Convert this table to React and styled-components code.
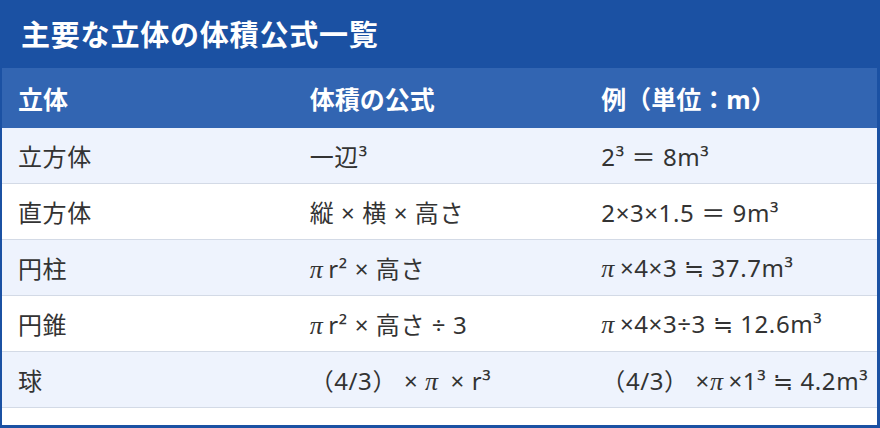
import React from 'react';
import styled, { createGlobalStyle } from 'styled-components';

const GlobalStyle = createGlobalStyle`
  html, body {
    margin: 0;
    padding: 0;
    background: #ffffff;
  }
  body {
    font-family: "Noto Sans", "Noto Sans CJK JP", sans-serif;
  }
`;

const Frame = styled.div`
  box-sizing: border-box;
  width: 880px;
  height: 428px;
  background: #ffffff;
  border: solid #1b51a3;
  border-width: 0 3px 3px 2px;
  overflow: hidden;
`;

const TitleBar = styled.h2`
  margin: 0 -3px 0 -2px;
  height: 68px;
  display: flex;
  align-items: center;
  padding: 0 21px 2px;
  box-sizing: border-box;
  background: #1b51a3;
  color: #ffffff;
  font-size: 29px;
  font-weight: 700;
  letter-spacing: 0.8px;
`;

const Table = styled.table`
  width: 100%;
  border-collapse: collapse;
  table-layout: fixed;
`;

const HeadCell = styled.th`
  height: 60px;
  padding: 0 16px;
  text-align: left;
  background: #3265b2;
  color: #ffffff;
  font-size: 25px;
  font-weight: 700;
  white-space: nowrap;
`;

const Row = styled.tr`
  background: ${(p) => (p.$alt ? '#ffffff' : '#eef3fd')};
  border-bottom: 1px solid #d3dae6;
`;

const Cell = styled.td`
  height: 55px;
  padding: 0 16px;
  color: #333333;
  font-size: 24px;
  letter-spacing: 0.6px;
  white-space: nowrap;
`;

// math pi, drawn like the reference's slanted serif glyph
const Pi = styled.span`
  font-family: "Liberation Serif", "DejaVu Serif", serif;
  font-style: italic;
  font-size: 26px;
  margin-right: 5px;
`;

const rows = [
  ['立方体', '一辺³', '2³ ＝ 8m³'],
  ['直方体', '縦 × 横 × 高さ', '2×3×1.5 ＝ 9m³'],
  ['円柱', 'πr² × 高さ', 'π×4×3 ≒ 37.7m³'],
  ['円錐', 'πr² × 高さ ÷ 3', 'π×4×3÷3 ≒ 12.6m³'],
  ['球', '（4/3） × π × r³', '（4/3） ×π×1³ ≒ 4.2m³'],
];

function MathText({ text }) {
  const parts = text.split('π');
  return parts.map((p, i) => (
    <React.Fragment key={i}>
      {i > 0 && <Pi>π</Pi>}
      {p}
    </React.Fragment>
  ));
}

export default function App() {
  return (
    <>
      <GlobalStyle />
      <Frame>
        <TitleBar>主要な立体の体積公式一覧</TitleBar>
        <Table>
          <thead>
            <tr>
              <HeadCell>立体</HeadCell>
              <HeadCell>体積の公式</HeadCell>
              <HeadCell>例（単位：m）</HeadCell>
            </tr>
          </thead>
          <tbody>
            {rows.map((r, i) => (
              <Row key={r[0]} $alt={i % 2 === 1}>
                <Cell>{r[0]}</Cell>
                <Cell><MathText text={r[1]} /></Cell>
                <Cell><MathText text={r[2]} /></Cell>
              </Row>
            ))}
          </tbody>
        </Table>
      </Frame>
    </>
  );
}
